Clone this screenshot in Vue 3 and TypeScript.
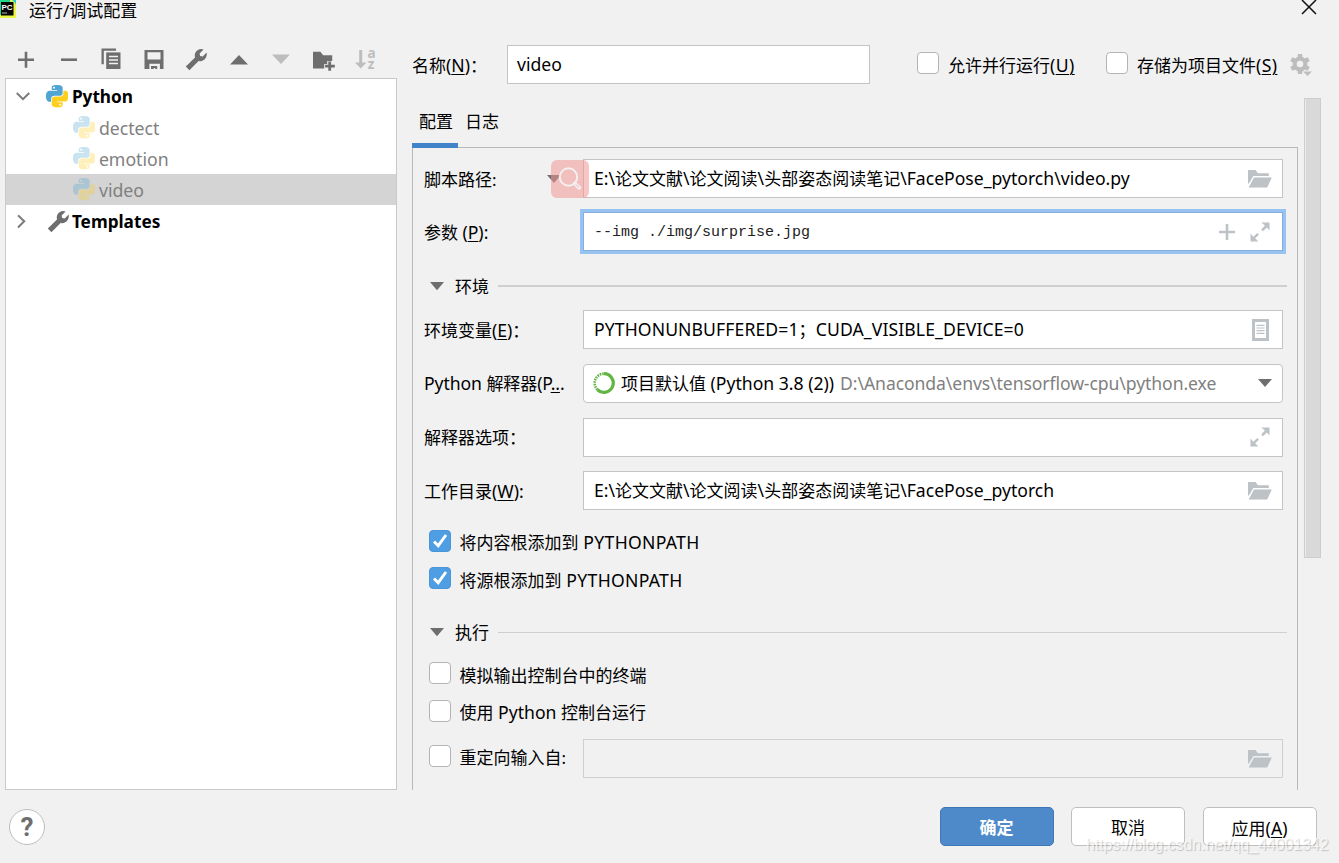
<script setup lang="ts">
import { h, type FunctionalComponent } from 'vue'

interface TreeItem {
  label: string
  selected: boolean
}

const items: TreeItem[] = [
  { label: 'dectect', selected: false },
  { label: 'emotion', selected: false },
  { label: 'video', selected: true },
]

const snake =
  'M14.25.18l.9.2.73.26.59.3.45.32.34.34.25.34.16.33.1.3.04.26.02.2-.01.13V8.5l-.05.63-.13.55-.21.46-.26.38-.3.31-.33.25-.35.19-.35.14-.33.1-.3.07-.26.04-.21.02H8.77l-.69.05-.59.14-.5.22-.41.27-.33.32-.27.35-.2.36-.15.37-.1.35-.07.32-.04.27-.02.21v3.06H3.17l-.21-.03-.28-.07-.32-.12-.35-.18-.36-.26-.36-.36-.35-.46-.32-.59-.28-.73-.21-.88-.14-1.05-.05-1.23.06-1.22.16-1.04.24-.87.32-.71.36-.57.4-.44.42-.33.42-.24.4-.16.36-.1.32-.05.24-.01h.16l.06.01h8.16v-.83H6.18l-.01-2.75-.02-.37.05-.34.11-.31.17-.28.25-.26.31-.23.38-.2.44-.18.51-.15.58-.12.64-.1.71-.06.77-.04.84-.02 1.27.05zm-6.3 1.98l-.23.33-.08.41.08.41.23.34.33.22.41.09.41-.09.33-.22.23-.34.08-.41-.08-.41-.23-.33-.33-.22-.41-.09-.41.09z'

const wrench =
  'M1.8 18.6L11 9.4C10 5.2 12.6 1.4 17 1l2.6.4-4 4 .5 2.6 2.6.5 4-4C23.4 8.6 21 13 16.2 13.2L14.6 13 5.4 22.2z'

// Two interlocking snakes; the lower one is the upper one turned by 180 degrees.
const PythonIcon: FunctionalComponent = () =>
  h('svg', { width: 22.4, height: 22.4, viewBox: '0 0 24 24' }, [
    h('path', { d: snake, fill: '#4fa5d3' }),
    h('path', { d: snake, fill: '#ffcf20', transform: 'rotate(180 12 12)' }),
  ])

const WrenchIcon: FunctionalComponent = () =>
  h('svg', { width: 24, height: 24, viewBox: '0 0 24 24' }, [h('path', { d: wrench, fill: '#6e6e6e' })])

const FolderIcon: FunctionalComponent = () =>
  h('svg', { width: 24, height: 18, viewBox: '0 0 24 18' }, [
    h('path', { d: 'M0 0h7.6l2.2 3.2H20.8V6H5.4L.9 13.4H0z', fill: '#bcc2c6' }),
    h('path', { d: 'M6 7.6H23.8L19.2 17.6H.6z', fill: '#bcc2c6' }),
  ])

const ExpandIcon: FunctionalComponent = () =>
  h('svg', { width: 20, height: 20, viewBox: '0 0 20 20' }, [
    h('path', { d: 'M11.3 .5H19.5V8.4L16.9 5.400 12.9 9.3 11.200 7.600 14.900 3.600z', fill: '#bcc2c6' }),
    h('path', { d: 'M.5 11.600V19.500H8.400L5.200 16.300 8.900 12.700 7.200 11 3.400 14.700z', fill: '#bcc2c6' }),
  ])
</script>

<template>
  <div class="dialog">
    <header class="titlebar">
      <svg class="logo" width="16" height="18" viewBox="0 0 16 18">
        <rect width="16" height="18" fill="#21d789" />
        <path d="M9 0h7v10z" fill="#12c9d8" />
        <path d="M10 0h4l2 5v13H0v-3l10-4z" fill="#e9f545" />
        <path d="M12 0h4v3z" fill="#20c8dc" />
        <rect x="1" y="2" width="12.500" height="13.500" fill="#050505" />
        <text x="1.500" y="10" class="logo-text">PC</text>
        <rect x="2" y="12.500" width="5" height="1" fill="#bbb" />
      </svg>
      <span class="title">运行/调试配置</span>
      <svg class="close" width="16" height="16" viewBox="0 0 16 16">
        <path d="M1 0L15 14M15 0L1 14" stroke="#111" stroke-width="1.500" />
      </svg>
    </header>

    <main class="body">
      <aside class="side">
        <div class="toolbar">
          <span class="tool"><svg width="24" height="24" viewBox="0 0 24 24"><path d="M10.700 3.700h2.600v6.700h6.700V13h-6.700v6.700h-2.600V13H4v-2.600h6.700z" fill="#6e6e6e" /></svg></span>
          <span class="tool"><svg width="24" height="24" viewBox="0 0 24 24"><path d="M4 10.400h16V13H4z" fill="#6e6e6e" /></svg></span>
          <span class="tool"><svg width="24" height="24" viewBox="0 0 24 24"><path d="M2.500.5H17v2.300H4.800v13.400H2.500z" fill="#6e6e6e" /><path d="M7.200 4.400h14.300V21H7.200z" fill="#6e6e6e" /><path d="M10 8.500h9M10 12h9M10 15.500h9" stroke="#f1f1f1" stroke-width="1.400" /></svg></span>
          <span class="tool"><svg width="24" height="24" viewBox="0 0 24 24"><path d="M2.500 2h19v19h-3.600v-5.200H7.400V21H2.500zM5.500 4.300v7.300h13V4.300z" fill="#6e6e6e" fill-rule="evenodd" /><path d="M9 18h6.200v3h-2v-1h-1.400v1H9z" fill="#6e6e6e" /></svg></span>
          <span class="tool"><WrenchIcon /></span>
          <span class="tool"><svg width="24" height="24" viewBox="0 0 24 24"><path d="M3 16.400L12 7l9 9.400z" fill="#6e6e6e" /></svg></span>
          <span class="tool"><svg width="24" height="24" viewBox="0 0 24 24"><path d="M3 6.400L12 16l9-9.600z" fill="#bdbdbd" /></svg></span>
          <span class="tool"><svg width="24" height="24" viewBox="0 0 24 24"><path d="M1 3.700h7.400l2.800 3.600h9v5.800h-5v3h-3v4.300H1z" fill="#6e6e6e" /><path d="M16.300 13.500h2.800v3.200h3.700v2.800h-3.700v3.200h-2.800v-3.200h-3.200v-2.800h3.200z" fill="#6e6e6e" /></svg></span>
          <span class="tool"><svg class="sort" width="24" height="24" viewBox="0 0 24 24"><path d="M5.200 2h3v12.500h4.200l-5.700 6-5.700-6h4.200z" fill="#bdbdbd" /><text x="13.600" y="10.200" class="az">a</text><text x="13.800" y="21.200" class="az">z</text></svg></span>
        </div>
        <div class="tree">
          <div class="node root">
            <svg class="chev" width="14" height="14" viewBox="0 0 14 14"><path d="M.8 3L7 9.200l6.200-6.200" fill="none" stroke="#7a7a7a" stroke-width="2" /></svg>
            <PythonIcon /><b>Python</b>
          </div>
          <div v-for="item in items" :key="item.label" class="node leaf" :class="{ selected: item.selected }">
            <PythonIcon class="faded" /><span>{{ item.label }}</span>
          </div>
          <div class="node root templates">
            <svg class="chev" width="14" height="14" viewBox="0 0 14 14"><path d="M2 .3L8.200 6.300l-6.200 6.200" fill="none" stroke="#7a7a7a" stroke-width="2" /></svg>
            <WrenchIcon class="tpl" /><b>Templates</b>
          </div>
        </div>
      </aside>

      <section class="right">
        <div class="name-row">
          <label class="name-label">名称<i class="en">(<u>N</u>)</i>：</label>
          <div class="field name-field"><span class="en">video</span></div>
          <span class="box first"></span>
          <span class="opt parallel">允许并行运行<i class="en">(<u>U)</u></i></span>
          <span class="box"></span>
          <span class="opt">存储为项目文件<i class="en">(<u>S)</u></i></span>
          <svg class="gear" width="24" height="24" viewBox="0 0 24 24">
            <g fill="#bdbdbd">
              <circle cx="10" cy="10" r="7.400" />
              <rect x="7.700" y="0" width="4.600" height="20" rx=".8" />
              <rect x="7.700" y="0" width="4.600" height="20" rx=".8" transform="rotate(60 10 10)" />
              <rect x="7.700" y="0" width="4.600" height="20" rx=".8" transform="rotate(120 10 10)" />
            </g>
            <circle cx="10" cy="10" r="3.300" fill="#f1f1f1" />
            <path d="M13 17.500h9l-4.500 4.500z" fill="#bdbdbd" />
          </svg>
        </div>

        <div class="lower">
          <div class="config">
            <nav class="tabs"><span class="tab active">配置</span><span class="tab">日志</span></nav>
            <div class="panel">
              <div class="row script">
                <span class="label drop">脚本路径:</span>
                <svg class="tri" width="14" height="8" viewBox="0 0 14 8"><path d="M0 0h14L7 8z" fill="#6e6e6e" /></svg>
                <div class="field">
                  <span class="path"><i class="en">E:\</i>论文文献<i class="en">\</i>论文阅读<i class="en">\</i>头部姿态阅读笔记<i class="en">\FacePose_pytorch\video.py</i></span>
                  <FolderIcon />
                  <span class="lens">
                    <svg width="24" height="24" viewBox="0 0 24 24"><circle cx="10.500" cy="10" r="8.700" fill="none" stroke="#f4f0f0" stroke-width="2" /><path d="M16.800 16.500l4.500 4.300" stroke="#f4f0f0" stroke-width="3.800" stroke-linecap="round" /><path d="M17.500 17.200l3.600 3.400" stroke="#f0b8b8" stroke-width="1" /></svg>
                  </span>
                </div>
              </div>
              <div class="row params">
                <span class="label">参数 <i class="en">(<u>P</u>):</i></span>
                <div class="field focus">
                  <span class="mono">--img ./img/surprise.jpg</span>
                  <svg class="plus" width="16" height="16" viewBox="0 0 16 16"><path d="M6.700 0h2.600v6.700H16v2.600H9.300V16H6.700V9.300H0V6.700h6.700z" fill="#bcc2c6" /></svg>
                  <ExpandIcon class="expand" />
                </div>
              </div>
              <div class="heading env-head">
                <svg width="14" height="9" viewBox="0 0 14 9"><path d="M0 0h14L7 8.300z" fill="#6e6e6e" /></svg>
                <span>环境</span><hr class="thick" />
              </div>
              <div class="row env">
                <span class="label">环境变量<i class="en">(<u>E</u>)</i>：</span>
                <div class="field">
                  <span class="envtext"><i class="en">PYTHONUNBUFFERED=1</i>；<i class="en">CUDA_VISIBLE_DEVICE=0</i></span>
                  <svg class="doc" width="17" height="22" viewBox="0 0 17 22"><path d="M1.500 1.500h14v19h-14z" fill="none" stroke="#bcc2c6" stroke-width="3" /><path d="M4.500 6.300h8M4.500 9h8M4.500 11.700h8M4.500 14.400h8" stroke="#bcc2c6" stroke-width="1.200" /></svg>
                </div>
              </div>
              <div class="row interp">
                <span class="label"><i class="en">Python </i>解释器<i class="en">(P<u>..</u>.</i></span>
                <div class="field combo">
                  <svg class="spin" width="24" height="24" viewBox="0 0 24 24">
                    <path d="M12 2.700a9.300 9.300 0 1 1-6.500 16" fill="none" stroke="#62b543" stroke-width="3.300" />
                    <path d="M5.500 18.700A9.300 9.300 0 0 1 12 2.700" fill="none" stroke="#62b543" stroke-width="2.600" stroke-dasharray="1.600 .9" />
                  </svg>
                  <span class="sdk">项目默认值<i class="en"> (Python 3.8 (2))</i></span>
                  <span class="en home">D:\Anaconda\envs\tensorflow-cpu\python.exe</span>
                  <svg class="arrow" width="14" height="8" viewBox="0 0 14 8"><path d="M0 0h14L7 8z" fill="#6e6e6e" /></svg>
                </div>
              </div>
              <div class="row options">
                <span class="label">解释器选项：</span>
                <div class="field"><span></span><ExpandIcon class="expand" /></div>
              </div>
              <div class="row workdir">
                <span class="label">工作目录<i class="en">(<u>W</u>):</i></span>
                <div class="field">
                  <span class="path"><i class="en">E:\</i>论文文献<i class="en">\</i>论文阅读<i class="en">\</i>头部姿态阅读笔记<i class="en">\FacePose_pytorch</i></span>
                  <FolderIcon />
                </div>
              </div>
              <div class="check c1">
                <span class="box on"><svg width="22" height="22" viewBox="0 0 22 22"><path d="M5 11.500l4.200 4.200L17 5" fill="none" stroke="#fff" stroke-width="2.900" /></svg></span>
                <span>将内容根添加到<i class="en caps"> PYTHONPATH</i></span>
              </div>
              <div class="check c2">
                <span class="box on"><svg width="22" height="22" viewBox="0 0 22 22"><path d="M5 11.500l4.200 4.200L17 5" fill="none" stroke="#fff" stroke-width="2.900" /></svg></span>
                <span>将源根添加到<i class="en caps"> PYTHONPATH</i></span>
              </div>
              <div class="heading exec-head">
                <svg width="14" height="9" viewBox="0 0 14 9"><path d="M0 0h14L7 8.300z" fill="#6e6e6e" /></svg>
                <span>执行</span><hr />
              </div>
              <div class="check c3"><span class="box"></span><span>模拟输出控制台中的终端</span></div>
              <div class="check c4"><span class="box"></span><span>使用<i class="en"> Python </i>控制台运行</span></div>
              <div class="row redirect">
                <div class="check label"><span class="box"></span><span>重定向输入自:</span></div>
                <div class="field disabled"><span></span><FolderIcon /></div>
              </div>
            </div>
          </div>
          <div class="scroll"><div class="thumb"></div></div>
        </div>
      </section>
    </main>

    <footer class="footer">
      <span class="help">?</span>
      <button class="btn primary">确定</button>
      <button class="btn">取消</button>
      <button class="btn">应用<i class="en">(<u>A</u>)</i></button>
    </footer>
    <div class="watermark">https://blog.csdn.net/qq_44001342</div>
  </div>
</template>

<style>
body {
  margin: 0;
  overflow: hidden;
}
</style>

<style scoped>
.dialog,
.dialog * {
  box-sizing: border-box;
}
.dialog {
  position: relative;
  width: 1339px;
  height: 863px;
  overflow: hidden;
  display: flex;
  flex-direction: column;
  background: #f1f1f1;
  color: #000;
  font: 17px/22px 'Noto Sans', 'Noto Sans CJK SC', sans-serif;
  white-space: nowrap;
}
.dialog svg {
  flex: none;
  display: block;
}
.en {
  font-style: normal;
  font-size: 17.6px;
  white-space: pre;
}
.caps {
  letter-spacing: 0.300px;
}
u {
  text-decoration-thickness: 1px;
  text-underline-offset: 2px;
}
.titlebar {
  height: 41px;
  display: flex;
  align-items: flex-start;
}
.logo-text {
  font: bold 8px 'Liberation Sans', sans-serif;
  fill: #fff;
}
.title {
  margin-left: 13px;
}
.close {
  margin-left: auto;
  margin-right: 22px;
}
.body {
  height: 749px;
  display: flex;
}
.side {
  width: 392px;
  margin-left: 5px;
  display: flex;
  flex-direction: column;
}
.toolbar {
  height: 37px;
  display: flex;
  align-items: center;
}
.tool {
  width: 42.500px;
  display: flex;
  justify-content: center;
}
.sort {
  overflow: visible;
}
.az {
  font: bold 13.500px 'Open Sans', sans-serif;
  fill: #bdbdbd;
}
.tree {
  flex: 1;
  padding-top: 2px;
  background: #fff;
  border: 1px solid #c9c9c9;
}
.node {
  height: 31px;
  display: flex;
  align-items: center;
}
.root {
  padding-left: 10px;
}
.templates {
  margin-top: 1px;
}
.chev {
  margin-right: 15.500px;
}
.root b {
  margin-left: 4px;
  font-size: 17.200px;
}
.tpl {
  margin: 0 -1.600px 0 0;
}
.leaf {
  padding-left: 67px;
  color: #808080;
  font-size: 17.700px;
}
.leaf span {
  margin-left: 3.500px;
}
.selected {
  background: #d4d4d4;
}
.faded {
  opacity: 0.300;
}
.right {
  width: 910px;
  margin-left: 15px;
  display: flex;
  flex-direction: column;
}
.name-row {
  height: 57px;
  padding-top: 4px;
  display: flex;
  align-items: flex-start;
}
.name-label {
  width: 95px;
  padding-top: 9px;
}
.field {
  position: relative;
  height: 39px;
  display: flex;
  align-items: center;
  justify-content: space-between;
  padding: 0 10px;
  background: #fff;
  border: 1px solid #c4c4c4;
}
.name-field {
  width: 363px;
  padding: 0 9px 2px;
}
.box {
  flex: none;
  width: 22px;
  height: 22px;
  background: #fff;
  border: 1.500px solid #b4b4b4;
  border-radius: 4px;
}
.name-row .box {
  margin-top: 7px;
}
.name-row .first {
  margin-left: 47px;
}
.opt {
  width: 142px;
  margin-left: 9px;
  padding-top: 9px;
}
.opt .en {
  letter-spacing: 0.400px;
}
.parallel {
  width: 158px;
}
.gear {
  margin: 9px 0 0 11px;
}
.lower {
  flex: 1;
  display: flex;
}
.config {
  width: 886px;
  display: flex;
  flex-direction: column;
}
.tabs {
  height: 50px;
  display: flex;
  position: relative;
  margin-bottom: -1px;
}
.tab {
  width: 46px;
  padding: 13px 0 0 7px;
}
.active {
  border-bottom: 5px solid #4083c9;
}
.panel {
  flex: 1;
  border: 1px solid #b9b9b9;
  border-bottom: 0;
  padding-left: 11px;
  display: flex;
  flex-direction: column;
}
.row {
  display: flex;
  align-items: center;
  height: 39px;
}
.row .label {
  flex: none;
  width: 159px;
  padding-top: 1px;
}
.row .drop {
  width: 123px;
  padding-top: 3px;
}
.tri {
  margin: 1px 22px 0 0;
}
.row .field {
  width: 700px;
}
.lens {
  position: absolute;
  left: -33px;
  top: 0;
  width: 38px;
  height: 38px;
  display: flex;
  align-items: center;
  justify-content: center;
  border-radius: 6px;
  background: rgba(243, 150, 150, 0.550);
}
.script {
  margin-top: 11px;
}
.script .path {
  margin-top: -1px;
}
.params {
  margin-top: 14px;
}
.focus {
  border-color: #87afda;
  box-shadow: 0 0 0 3px #97c3f3;
}
.mono {
  padding-top: 2px;
  font: 15px/20px 'Liberation Mono', monospace;
  color: #222;
}
.plus {
  margin: 0 15px 0 auto;
}
.expand {
  margin-right: 2px;
}
.heading {
  height: 22px;
  display: flex;
  align-items: center;
  padding-left: 5.500px;
}
.heading span {
  margin-left: 11.500px;
  padding-top: 2px;
}
.heading hr {
  width: 789px;
  height: 1px;
  margin: 0 0 0 9px;
  border: 0;
  background: #cfcfcf;
}
.heading .thick {
  height: 2px;
}
.env-head {
  margin-top: 24px;
}
.env {
  margin-top: 13px;
}
.envtext {
  letter-spacing: 0.100px;
}
.doc {
  margin-right: 3px;
}
.interp {
  margin-top: 15px;
}
.row.interp .label {
  padding-top: 0;
  margin-top: -1px;
  letter-spacing: -0.080px;
}
.combo {
  border-radius: 4px;
  padding: 0 10px 1px 8px;
}
.sdk {
  margin-left: 5px;
}
.home {
  margin-left: 6px;
  color: #808080;
  letter-spacing: -0.090px;
}
.arrow {
  margin-left: auto;
}
.options {
  margin-top: 15px;
}
.options .expand {
  margin-top: -2px;
}
.workdir {
  margin-top: 14px;
}
.check {
  height: 22px;
  display: flex;
  align-items: center;
  padding-left: 4.500px;
}
.check > span + span {
  margin-left: 9px;
  padding-top: 4px;
}
.on {
  display: flex;
  align-items: center;
  justify-content: center;
  background: #4f9de2;
  border-color: #4a94d8;
}
.c1 {
  margin-top: 20px;
}
.c1 > span + span {
  padding-top: 2px;
}
.c2 {
  margin-top: 15px;
}
.exec-head {
  margin-top: 32px;
}
.c3 {
  margin-top: 19px;
}
.c3 > span + span {
  padding-top: 5px;
}
.c4 {
  margin-top: 16px;
}
.c4 > span + span {
  padding-top: 3px;
}
.redirect {
  margin-top: 17px;
}
.row .check.label {
  padding-top: 0;
  margin-top: -5px;
}
.disabled {
  background: #f1f1f1;
  border-color: #cfcfcf;
}
.scroll {
  width: 17px;
  margin-left: 6px;
}
.thumb {
  height: 460px;
  background: #d9d9d9;
  border: 1px solid #cdcdcd;
  box-shadow: inset 1px 0 #ececec;
}
.footer {
  height: 73px;
  padding: 17px 22.500px 0 9px;
  display: flex;
  gap: 17.500px;
}
.help {
  width: 36px;
  height: 36px;
  margin: 2px auto 0 0;
  border: 1px solid #bdbdbd;
  border-radius: 50%;
  background: #fff;
  color: #6e6e6e;
  font: bold 26px/35px 'Roboto', sans-serif;
  text-align: center;
}
.btn {
  width: 114px;
  height: 39px;
  padding: 3px 0 0;
  border: 1px solid #bfbfbf;
  border-radius: 5px;
  background: #fff;
  font: inherit;
  color: #000;
}
.primary {
  background: #4e8aca;
  border-color: #3f76b5;
  color: #fff;
  font-weight: bold;
}
.watermark {
  position: absolute;
  left: 1086px;
  top: 834px;
  font: 15.800px/22px 'Liberation Sans', sans-serif;
  color: rgba(255, 255, 255, 0.700);
  text-shadow: 1px 1px 1px rgba(0, 0, 0, 0.200);
}
</style>
